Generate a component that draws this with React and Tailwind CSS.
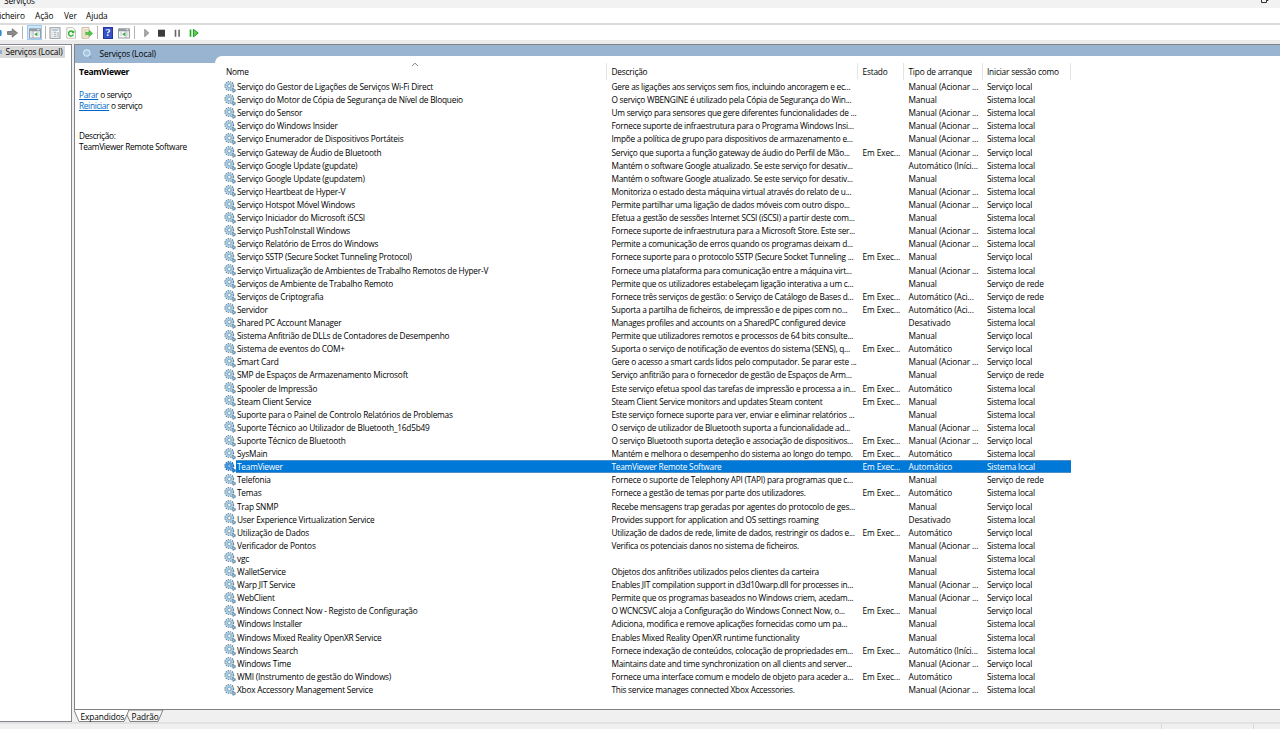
// src/App.jsx
import { clsx } from "clsx";

const A = "Automático";
const AA = "Automático (Aci...";
const AI = "Automático (Iníci...";
const M = "Manual";
const MA = "Manual (Acionar ...";
const D = "Desativado";
const RUN = "Em Exec...";
const LOCAL = "Serviço local";
const SYS = "Sistema local";
const NET = "Serviço de rede";

// name, description, state, startup type, log on as
const services = [
  ["Serviço do Gestor de Ligações de Serviços Wi-Fi Direct", "Gere as ligações aos serviços sem fios, incluindo ancoragem e ec...", "", MA, LOCAL],
  ["Serviço do Motor de Cópia de Segurança de Nível de Bloqueio", "O serviço WBENGINE é utilizado pela Cópia de Segurança do Win...", "", M, SYS],
  ["Serviço do Sensor", "Um serviço para sensores que gere diferentes funcionalidades de ...", "", MA, SYS],
  ["Serviço do Windows Insider", "Fornece suporte de infraestrutura para o Programa Windows Insi...", "", MA, SYS],
  ["Serviço Enumerador de Dispositivos Portáteis", "Impõe a política de grupo para dispositivos de armazenamento e...", "", MA, SYS],
  ["Serviço Gateway de Áudio de Bluetooth", "Serviço que suporta a função gateway de áudio do Perfil de Mão...", RUN, MA, LOCAL],
  ["Serviço Google Update (gupdate)", "Mantém o software Google atualizado. Se este serviço for desativ...", "", AI, SYS],
  ["Serviço Google Update (gupdatem)", "Mantém o software Google atualizado. Se este serviço for desativ...", "", M, SYS],
  ["Serviço Heartbeat de Hyper-V", "Monitoriza o estado desta máquina virtual através do relato de u...", "", MA, SYS],
  ["Serviço Hotspot Móvel Windows", "Permite partilhar uma ligação de dados móveis com outro dispo...", "", MA, LOCAL],
  ["Serviço Iniciador do Microsoft iSCSI", "Efetua a gestão de sessões Internet SCSI (iSCSI) a partir deste com...", "", M, SYS],
  ["Serviço PushToInstall Windows", "Fornece suporte de infraestrutura para a Microsoft Store. Este ser...", "", MA, SYS],
  ["Serviço Relatório de Erros do Windows", "Permite a comunicação de erros quando os programas deixam d...", "", MA, SYS],
  ["Serviço SSTP (Secure Socket Tunneling Protocol)", "Fornece suporte para o protocolo SSTP (Secure Socket Tunneling ...", RUN, M, LOCAL],
  ["Serviço Virtualização de Ambientes de Trabalho Remotos de Hyper-V", "Fornece uma plataforma para comunicação entre a máquina virt...", "", MA, SYS],
  ["Serviços de Ambiente de Trabalho Remoto", "Permite que os utilizadores estabeleçam ligação interativa a um c...", "", M, NET],
  ["Serviços de Criptografia", "Fornece três serviços de gestão: o Serviço de Catálogo de Bases d...", RUN, AA, NET],
  ["Servidor", "Suporta a partilha de ficheiros, de impressão e de pipes com no...", RUN, AA, SYS],
  ["Shared PC Account Manager", "Manages profiles and accounts on a SharedPC configured device", "", D, SYS],
  ["Sistema Anfitrião de DLLs de Contadores de Desempenho", "Permite que utilizadores remotos e processos de 64 bits consulte...", "", M, LOCAL],
  ["Sistema de eventos do COM+", "Suporta o serviço de notificação de eventos do sistema (SENS), q...", RUN, A, LOCAL],
  ["Smart Card", "Gere o acesso a smart cards lidos pelo computador. Se parar este ...", "", MA, LOCAL],
  ["SMP de Espaços de Armazenamento Microsoft", "Serviço anfitrião para o fornecedor de gestão de Espaços de Arm...", "", M, NET],
  ["Spooler de Impressão", "Este serviço efetua spool das tarefas de impressão e processa a in...", RUN, A, SYS],
  ["Steam Client Service", "Steam Client Service monitors and updates Steam content", RUN, M, SYS],
  ["Suporte para o Painel de Controlo Relatórios de Problemas", "Este serviço fornece suporte para ver, enviar e eliminar relatórios ...", "", M, SYS],
  ["Suporte Técnico ao Utilizador de Bluetooth_16d5b49", "O serviço de utilizador de Bluetooth suporta a funcionalidade ad...", "", MA, SYS],
  ["Suporte Técnico de Bluetooth", "O serviço Bluetooth suporta deteção e associação de dispositivos...", RUN, MA, LOCAL],
  ["SysMain", "Mantém e melhora o desempenho do sistema ao longo do tempo.", RUN, A, SYS],
  ["TeamViewer", "TeamViewer Remote Software", RUN, A, SYS],
  ["Telefonia", "Fornece o suporte de Telephony API (TAPI) para programas que c...", "", M, NET],
  ["Temas", "Fornece a gestão de temas por parte dos utilizadores.", RUN, A, SYS],
  ["Trap SNMP", "Recebe mensagens trap geradas por agentes do protocolo de ges...", "", M, LOCAL],
  ["User Experience Virtualization Service", "Provides support for application and OS settings roaming", "", D, SYS],
  ["Utilização de Dados", "Utilização de dados de rede, limite de dados, restringir os dados e...", RUN, A, LOCAL],
  ["Verificador de Pontos", "Verifica os potenciais danos no sistema de ficheiros.", "", MA, SYS],
  ["vgc", "", "", M, SYS],
  ["WalletService", "Objetos dos anfitriões utilizados pelos clientes da carteira", "", M, SYS],
  ["Warp JIT Service", "Enables JIT compilation support in d3d10warp.dll for processes in...", "", MA, LOCAL],
  ["WebClient", "Permite que os programas baseados no Windows criem, acedam...", "", MA, LOCAL],
  ["Windows Connect Now - Registo de Configuração", "O WCNCSVC aloja a Configuração do Windows Connect Now, o...", RUN, M, LOCAL],
  ["Windows Installer", "Adiciona, modifica e remove aplicações fornecidas como um pa...", "", M, SYS],
  ["Windows Mixed Reality OpenXR Service", "Enables Mixed Reality OpenXR runtime functionality", "", M, SYS],
  ["Windows Search", "Fornece indexação de conteúdos, colocação de propriedades em...", RUN, AI, SYS],
  ["Windows Time", "Maintains date and time synchronization on all clients and server...", "", MA, LOCAL],
  ["WMI (Instrumento de gestão do Windows)", "Fornece uma interface comum e modelo de objeto para aceder a...", RUN, A, SYS],
  ["Xbox Accessory Management Service", "This service manages connected Xbox Accessories.", "", MA, SYS],
];

const cols = "grid grid-cols-[391px_251px_46px_78.5px_88.5px]";

function Gears({ selected }) {
  const rim = selected ? "#0f5ca8" : "#587f9b";
  const fill = selected ? "#3f97df" : "#a5cce2";
  return (
    <svg viewBox="0 0 12 12" className="size-3 shrink-0">
      <circle cx="5.3" cy="5" r="4.2" fill="none" stroke={rim} strokeWidth="1.4" strokeDasharray="1.4 .8" />
      <circle cx="5.3" cy="5" r="2.9" fill="#f4faff" stroke={fill} strokeWidth="1.9" />
      <circle cx="5.3" cy="5" r="1.7" fill={selected ? "#8cc8f4" : "#fff"} stroke={rim} strokeWidth=".7" />
      <circle cx="9.6" cy="9.4" r="1.5" fill={fill} stroke={rim} strokeWidth="1.2" strokeDasharray="1.3 .5" />
    </svg>
  );
}

function Divider() {
  return <div className="h-[13px] w-px bg-[#b4b4b4]" />;
}

// small window with a side pane
function PaneIcon({ flip }) {
  return (
    <svg viewBox="0 0 12 12" className="size-3">
      <rect x=".5" y="2" width="11" height="9" fill="#f7f8f8" stroke="#9a9fa4" />
      <rect x=".5" y="1.5" width="11" height="2.8" fill="#929aa2" />
      <path d="M8 2.7h2.5" stroke="#fff" strokeWidth=".8" />
      <path d={flip ? "M8 4v7" : "M4 4v7"} stroke="#9a9fa4" strokeWidth=".8" />
      {flip ? (
        <path d="M9 6h1.5M9 8h1.5M2 6h2M2 8h2" stroke="#b5bbc0" strokeWidth=".8" />
      ) : (
        <path d="M1.5 6h1.6M1.5 8h1.6M9 6h1.5M9 8h1.5" stroke="#b5bbc0" strokeWidth=".8" />
      )}
      <path d={flip ? "M7.2 5.3v4L4.2 7.3z" : "M8.3 5.3v4L5.3 7.3z"} fill="#35a83d" />
    </svg>
  );
}

function Toolbar() {
  return (
    <div className="flex h-[15px] items-center bg-white">
      <svg viewBox="0 0 20 12" className="h-3 w-5">
        <path d="M-5 6 -1 3h2.2q1 3 0 6H-1z" fill="#2a8ad4" />
        <path d="M7.5 4.5h4.7V1.8L17.5 6l-5.3 4.2V7.5H7.5z" fill="#8a8a8a" stroke="#6d6d6d" strokeWidth=".8" />
      </svg>
      <div className="ml-[2px]"><Divider /></div>
      <div className="z-10 ml-[4px] flex h-[15px] w-[15px] items-center justify-center border border-[#99cdf5] bg-[#cce6fb]">
        <PaneIcon />
      </div>
      <div className="ml-[3px]"><Divider /></div>
      <svg viewBox="0 0 12 12" className="ml-[3px] size-3">
        <rect x="1" y=".8" width="10" height="10.5" fill="#fff" stroke="#8b939b" />
        <path d="M2.5 3h7" stroke="#7d97b0" />
        <path d="M2.5 5.2h1M2.5 7.2h1M2.5 9.2h1M4.5 5.2h3M4.5 7.2h3M4.5 9.2h3M9 5v5" stroke="#96a0aa" />
      </svg>
      <svg viewBox="0 0 12 12" className="ml-[4px] size-3">
        <path d="M1.8.7h6l2.7 2.5v8H1.8z" fill="#fff" stroke="#c0bba5" strokeWidth=".9" />
        <path d="M8 4.8A2.5 2.5 0 1 0 8.4 7.5" fill="none" stroke="#2eb135" strokeWidth="1.5" />
        <path d="M9.4 3v3.3H6.2z" fill="#2eb135" />
      </svg>
      <svg viewBox="0 0 12 12" className="ml-[4px] size-3">
        <path d="M1 .7h7v10.5H1z" fill="#fffbe9" stroke="#bcae86" strokeWidth=".9" />
        <path d="M2.3 3h4.4M2.3 5h3M2.3 7h3M2.3 9h4.4" stroke="#b9b193" strokeWidth=".8" />
        <path d="M4.8 5.2h3.4V3.3L11.7 6.4 8.2 9.5V7.6H4.8z" fill="#54c746" stroke="#2e9e2a" strokeWidth=".5" />
      </svg>
      <div className="ml-[4px]"><Divider /></div>
      <div className="ml-[5px] flex h-3 w-[10px] items-center justify-center border border-[#25379b] bg-[#3552c6] font-['Liberation_Serif',serif] text-[10px] leading-none font-bold text-white">
        ?
      </div>
      <div className="ml-[5px]"><PaneIcon flip /></div>
      <div className="ml-[4px]"><Divider /></div>
      <svg viewBox="0 0 60 12" className="ml-[7px] h-3 w-[60px]">
        <path d="M2.7 2.3v7.4L6.8 6z" fill="#aaa" stroke="#858585" strokeWidth=".8" />
        <rect x="16" y="2.7" width="7" height="7" fill="#3c3c3c" />
        <path d="M33.5 2.7v7M37.1 2.7v7" stroke="#666" strokeWidth="1.6" />
        <path d="M48.5 2.5v7.2" stroke="#25ab25" strokeWidth="1.7" />
        <path d="M51.4 2.3v7.6L56.2 6z" fill="#5fd14f" stroke="#1c9c22" />
      </svg>
    </div>
  );
}

function Details() {
  return (
    <div className="w-[140px] shrink-0 pl-1 leading-[10.3px] tracking-[-0.33px]">
      <h1 className="pt-1 text-[8.6px] font-bold">TeamViewer</h1>
      <p className="mt-[13px]">
        <a href="#parar" className="text-[#0066cc] underline">Parar</a> o serviço
      </p>
      <p>
        <a href="#reiniciar" className="text-[#0066cc] underline">Reiniciar</a> o serviço
      </p>
      <p className="mt-[20.5px]">Descrição:</p>
      <p>TeamViewer Remote Software</p>
    </div>
  );
}

function ServiceList() {
  return (
    <div className="relative -mt-[7px] min-w-0 flex-1 rounded-tl-[7px] bg-white pt-[7px] pl-px">
      <svg viewBox="0 0 8 5" className="absolute top-[6px] left-[196px] h-[5px] w-2">
        <path d="M1 4 4 1.2 7 4" fill="none" stroke="#777" strokeWidth=".9" />
      </svg>
      <div className={clsx(cols, "h-[17px] items-stretch leading-[17px] tracking-[-0.2px]")}>
        {["Nome", "Descrição", "Estado", "Tipo de arranque", "Iniciar sessão como"].map((title, i) => (
          <div key={title} className={clsx("border-r border-[#e5e5e5]", i === 0 ? "pl-[10px]" : "pl-[4.5px]")}>
            {title}
          </div>
        ))}
      </div>
      {services.map(([name, description, state, startup, account]) => {
        const selected = name === "TeamViewer";
        const bar = selected && "border-y border-[#4d8fc4] bg-[#0078d7] leading-[11px]";
        return (
          <div key={name} className={clsx(cols, "h-[13.12px] leading-[13px] whitespace-nowrap", selected && "text-white")}>
            <div className="flex items-center pl-2">
              <Gears selected={selected} />
              <span className={clsx("h-full flex-1 pl-px tracking-[-0.21px]", bar)}>{name}</span>
            </div>
            <div className={clsx("pl-[4.5px] tracking-[-0.25px]", bar)}>{description}</div>
            <div className={clsx("pl-[4.5px]", bar)}>{state}</div>
            <div className={clsx("pl-[4.5px]", bar)}>{startup}</div>
            <div className={clsx("pl-[4.5px] tracking-[-0.2px]", bar)}>{account}</div>
          </div>
        );
      })}
    </div>
  );
}

function Tabs() {
  return (
    <div className="relative h-3 w-[100px] leading-[13px]">
      <svg viewBox="0 0 100 12" className="absolute inset-0 h-3 w-[100px]">
        <path d="M55 0h34l-5 11.5H57L53 6z" fill="#f5f5f5" />
        <path d="M0-1h55l-5 12.5H5z" fill="#fff" />
        <path d="M0 0 5 11.5h45L55 0M55 0h34M53 5l3 6.5h28L89 0" fill="none" stroke="#777" strokeWidth=".9" />
      </svg>
      <div className="relative flex">
        <span className="w-[51px] pl-[6.5px]">Expandidos</span>
        <span className="pl-[6.5px]">Padrão</span>
      </div>
    </div>
  );
}

export default function App() {
  return (
    <div className="flex h-[729px] w-[1280px] flex-col overflow-hidden bg-[#f0f0f0] font-['Open_Sans','Noto_Sans',sans-serif] text-[8.3px] tracking-[-0.1px] text-black">
      {/* title bar */}
      <div className="flex h-2 shrink-0 justify-between bg-[#f2f2f2] pr-[11px] pl-1">
        <span className="-mt-[5px] leading-[12px]">Serviços</span>
        <svg viewBox="0 0 9 4" className="h-1 w-[9px]">
          <path d="M1.5 0v2.5h5V0M7 .5h1.3" fill="none" stroke="#333" />
        </svg>
      </div>
      <div className="flex h-[15px] shrink-0 bg-white leading-[16px]">
        <span className="-ml-[5px] w-[40px]">Ficheiro</span>
        <span className="w-[29px]">Ação</span>
        <span className="w-[22px]">Ver</span>
        <span>Ajuda</span>
      </div>
      <div className="h-[2px] shrink-0 bg-[#dcdcdc]" />
      <Toolbar />
      <div className="h-1 shrink-0 bg-[#ebebeb]" />

      <div className="flex h-[678px] shrink-0">
        <aside className="w-[72px] border border-l-0 border-[#828790] bg-white">
          <div className="mt-px flex h-3 w-[65px] items-center bg-[#d9d9d9] leading-[12px]">
            <span className="h-1 w-[2px] bg-[#8fb3cc]" />
            <span className="ml-[3.5px] whitespace-nowrap">Serviços (Local)</span>
          </div>
        </aside>
        <main className="ml-[2px] flex min-w-0 flex-1 flex-col">
          <div className="flex h-[666px] flex-col border-y border-l border-[#828282] bg-white">
            <header className="flex h-[18px] shrink-0 items-center bg-[#99b4d1] pl-[7px]">
              <svg viewBox="0 0 12 12" className="size-3">
                <circle cx="4.8" cy="5" r="3.2" fill="#a9c4de" stroke="#cfe6f4" strokeWidth="1.2" />
                <path d="m7.5 8 2 2.3" stroke="#7d9ab8" strokeWidth="1.2" />
              </svg>
              <span className="ml-[5.5px] pt-px tracking-[-0.15px]">Serviços (Local)</span>
            </header>
            <div className="flex min-h-0 flex-1">
              <Details />
              <ServiceList />
            </div>
          </div>
          <Tabs />
        </main>
      </div>

      {/* status bar */}
      <footer className="flex flex-1 border-t-2 border-[#e2e2e2]">
        <div className="w-[1162px] border-r border-[#d9d9d9]" />
        <div className="w-[92px] border-r border-[#d9d9d9]" />
      </footer>
    </div>
  );
}
